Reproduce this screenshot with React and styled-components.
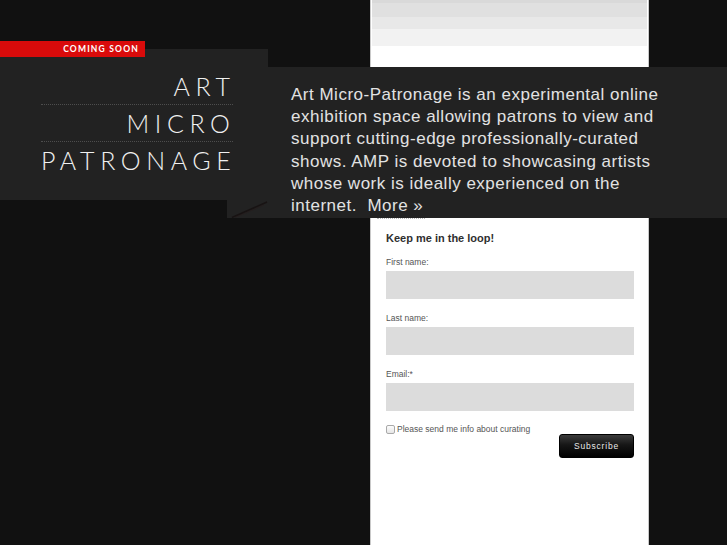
import React from "react";
import styled, { createGlobalStyle } from "styled-components";

const Global = createGlobalStyle`
  html, body { margin: 0; padding: 0; background: #111; }
  body { font-family: "Liberation Sans", Arial, sans-serif; }
`;

const Page = styled.div`
  display: grid;
  grid-template-columns: 227px 41px 102px 279px 1fr;
  grid-template-rows: 41px 8px 18px 133px 18px 1fr;
  height: 100vh;
  min-height: 545px;
  overflow: hidden;
`;

/* white column */
const Column = styled.div`
  grid-column: 4;
  grid-row: 1 / -1;
  z-index: 0;
  background: #fff;
  border-left: 1px solid #c9c9c9;
  border-right: 1px solid #c9c9c9;
  box-sizing: border-box;
  display: flex;
  flex-direction: column;
`;

const Stripes = styled.div`
  display: flex;
  flex-direction: column;
  padding: 0 1px;
  height: 67px;
  box-sizing: border-box;
`;

const Stripe = styled.div`
  height: ${(p) => p.$h}px;
  background: ${(p) => p.$c};
`;

const Form = styled.form`
  margin-top: 151px;
  display: flex;
  flex-direction: column;
`;

const DotMark = styled.div`
  width: 48px;
  margin-left: 6px;
  border-top: 1px dotted #b5b5b5;
`;

const FormBody = styled.div`
  padding: 0 14px 0 15px;
  display: flex;
  flex-direction: column;
`;

const Heading = styled.h3`
  margin: 12px 0 12px;
  font-size: 11px;
  line-height: 14px;
  font-weight: 700;
  color: #2f2f2f;
`;

const Field = styled.label`
  display: flex;
  flex-direction: column;
  margin-bottom: 14px;
`;

const Label = styled.span`
  font-size: 8.5px;
  line-height: 10px;
  color: #555;
  margin-bottom: 4px;
`;

const Input = styled.input`
  height: 28px;
  border: none;
  margin: 0;
  padding: 0 6px;
  background: #dcdcdc;
  box-sizing: border-box;
  width: 100%;
  outline: none;
`;

const CheckRow = styled.label`
  display: flex;
  align-items: center;
  gap: 2px;
  height: 9px;
  font-size: 8.5px;
  line-height: 9px;
  color: #555;
`;

const Box = styled.span`
  width: 9px;
  height: 9px;
  box-sizing: border-box;
  border: 1px solid #a9a9a9;
  border-radius: 2px;
  background: linear-gradient(#fdfdfd, #e6e6e6);
  flex: none;
`;

const Button = styled.button`
  align-self: flex-end;
  width: 75px;
  height: 24px;
  margin: 0;
  padding: 0;
  border: 1px solid #000;
  border-radius: 3px;
  background: linear-gradient(#3b3b3b 0%, #161616 45%, #000 100%);
  color: #e8e8e8;
  font-family: "Liberation Sans", Arial, sans-serif;
  font-size: 8.5px;
  letter-spacing: 0.8px;
  cursor: pointer;
`;

/* dark band with the blurb */
const Band = styled.section`
  grid-column: 2 / -1;
  grid-row: 4 / 6;
  z-index: 1;
  background: #222;
  display: flex;
`;

const Fold = styled.svg`
  flex: none;
  align-self: flex-end;
  width: 41px;
  height: 18px;
  display: block;
`;

const Blurb = styled.p`
  margin: 0;
  padding: 17px 0 0 23px;
  font-size: 17px;
  line-height: 22.2px;
  letter-spacing: 0.5px;
  color: #e2e2e2;
  white-space: nowrap;
`;

const More = styled.a`
  color: #e2e2e2;
  text-decoration: none;
`;

/* logo block */
const Brand = styled.header`
  grid-column: 1 / 3;
  grid-row: 2 / 5;
  z-index: 2;
  display: flex;
  flex-direction: column;
`;

const Ribbon = styled.div`
  position: relative;
  z-index: 1;
  width: 145px;
  height: 16px;
  box-sizing: border-box;
  background: #d90b0b;
  color: #fff;
  display: flex;
  align-items: center;
  justify-content: flex-end;
  padding-right: 6px;
  font-family: Lato, "Liberation Sans", sans-serif;
  font-weight: 700;
  font-size: 8.5px;
  letter-spacing: 1.2px;
`;

const Panel = styled.div`
  flex: 1;
  margin-top: -8px;
  background: #222;
  padding: 19px 35px 0 41px;
`;

const Word = styled.div`
  text-align: right;
  font-family: Lato, "Liberation Sans", sans-serif;
  font-weight: 300;
  font-size: 25px;
  line-height: 36px;
  letter-spacing: 5.6px;
  color: #f0f0f0;
  border-bottom: ${(p) => (p.$last ? "none" : "1px dotted #4d4d4d")};
  & > span {
    margin-right: -2.5px;
  }
`;

export default function App() {
  return (
    <>
      <Global />
      <Page>
        <Column>
          <Stripes>
            <Stripe $h={3} $c="#d9d9d9" />
            <Stripe $h={14} $c="#e0e0e0" />
            <Stripe $h={12} $c="#e8e8e8" />
            <Stripe $h={17} $c="#f2f2f2" />
          </Stripes>
          <Form onSubmit={(e) => e.preventDefault()}>
            <DotMark />
            <FormBody>
              <Heading>Keep me in the loop!</Heading>
              <Field>
                <Label>First name:</Label>
                <Input type="text" />
              </Field>
              <Field>
                <Label>Last name:</Label>
                <Input type="text" />
              </Field>
              <Field>
                <Label>Email:*</Label>
                <Input type="email" />
              </Field>
              <CheckRow>
                <Box />
                Please send me info about curating
              </CheckRow>
              <Button type="submit">Subscribe</Button>
            </FormBody>
          </Form>
        </Column>

        <Band>
          <Fold viewBox="0 0 41 18">
            <path d="M5 17.5 L40 2" stroke="#140d0d" strokeWidth="1.4" opacity="0.7" />
            <path d="M8 17.5 L37 5" stroke="#2a1a1a" strokeWidth="0.8" opacity="0.5" />
          </Fold>
          <Blurb>
            Art Micro-Patronage is an experimental online
            <br />
            exhibition space allowing patrons to view and
            <br />
            support cutting-edge professionally-curated
            <br />
            shows. AMP is devoted to showcasing artists
            <br />
            whose work is ideally experienced on the
            <br />
            internet.&nbsp; <More href="#">More »</More>
          </Blurb>
        </Band>

        <Brand>
          <Ribbon>COMING SOON</Ribbon>
          <Panel>
            <Word><span>ART</span></Word>
            <Word><span>MICRO</span></Word>
            <Word $last><span>PATRONAGE</span></Word>
          </Panel>
        </Brand>
      </Page>
    </>
  );
}
